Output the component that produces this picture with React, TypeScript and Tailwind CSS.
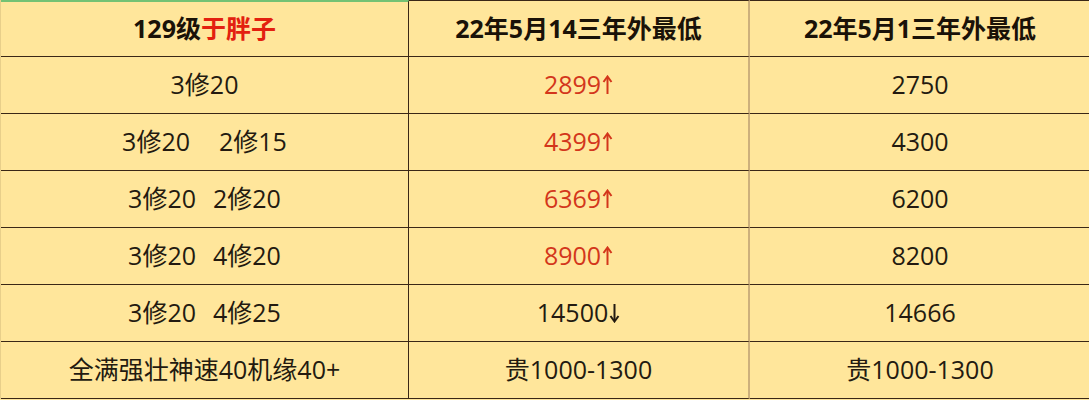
const rows: { a: string[]; b: string; arrow?: 'up' | 'down'; bRed?: boolean; c: string; gap?: string }[] = [
  { a: ['3修20'], b: '2899', arrow: 'up', bRed: true, c: '2750' },
  { a: ['3修20', '2修15'], b: '4399', arrow: 'up', bRed: true, c: '4300', gap: 'gap-[29px]' },
  { a: ['3修20', '2修20'], b: '6369', arrow: 'up', bRed: true, c: '6200', gap: 'gap-[17px]' },
  { a: ['3修20', '4修20'], b: '8900', arrow: 'up', bRed: true, c: '8200', gap: 'gap-[17px]' },
  { a: ['3修20', '4修25'], b: '14500', arrow: 'down', c: '14666', gap: 'gap-[17px]' },
  { a: ['全满强壮神速40机缘40+'], b: '贵1000-1300', c: '贵1000-1300' },
];

const font = { fontFamily: '"Open Sans", "Noto Sans CJK SC", sans-serif' };

function Arrow({ dir }: { dir: 'up' | 'down' }) {
  return (
    <svg width="11" height="20" viewBox="0 0 11 20" className={`ml-[1px] ${dir === 'down' ? 'rotate-180' : ''}`}>
      <path d="M5.5 2 V19" stroke="currentColor" strokeWidth="2" fill="none" />
      <path d="M1.5 7 L5.5 1.5 L9.5 7" stroke="currentColor" strokeWidth="2" fill="none" strokeLinejoin="miter" />
    </svg>
  );
}

export default function App() {
  return (
    <div className="w-[1089px] h-[400px] bg-[#ffe69b] overflow-hidden" style={font}>
      <div className="grid grid-cols-[408px_341px_340px] border-l border-l-[#e8cf8a]">
        {/* Header */}
        <div className="h-[57px] border-t-2 border-t-[#74c274] border-b border-b-[#3a2716] border-r border-r-[#3a2716] flex items-center justify-center text-[25px] font-bold text-[#1a1208]">
          129级<span className="text-[#e3200f]">于胖子</span>
        </div>
        <div className="h-[57px] border-t border-t-[#3a2716] border-b border-b-[#3a2716] border-r-2 border-r-[#cdb07c] flex items-center justify-center text-[25px] font-bold text-[#1a1208]">
          22年5月14三年外最低
        </div>
        <div className="h-[57px] border-t border-t-[#3a2716] border-b border-b-[#3a2716] flex items-center justify-center text-[25px] font-bold text-[#1a1208]">
          22年5月1三年外最低
        </div>

        {/* Body */}
        {rows.map((r, i) => (
          <div key={i} className="contents">
            <div className="h-[57px] border-b border-b-[#3a2716] border-r border-r-[#3a2716] flex items-center justify-center text-[25px] text-[#231a10]">
              <div className={`flex ${r.gap ?? ''}`}>
                {r.a.map((t, j) => (
                  <span key={j}>{t}</span>
                ))}
              </div>
            </div>
            <div
              className={`h-[57px] border-b border-b-[#3a2716] border-r-2 border-r-[#cdb07c] flex items-center justify-center text-[25px] ${
                r.bRed ? 'text-[#d3361b]' : 'text-[#231a10]'
              }`}
            >
              {r.b}
              {r.arrow && <Arrow dir={r.arrow} />}
            </div>
            <div className="h-[57px] border-b border-b-[#3a2716] flex items-center justify-center text-[25px] text-[#231a10]">
              {r.c}
            </div>
          </div>
        ))}
      </div>
    </div>
  );
}
